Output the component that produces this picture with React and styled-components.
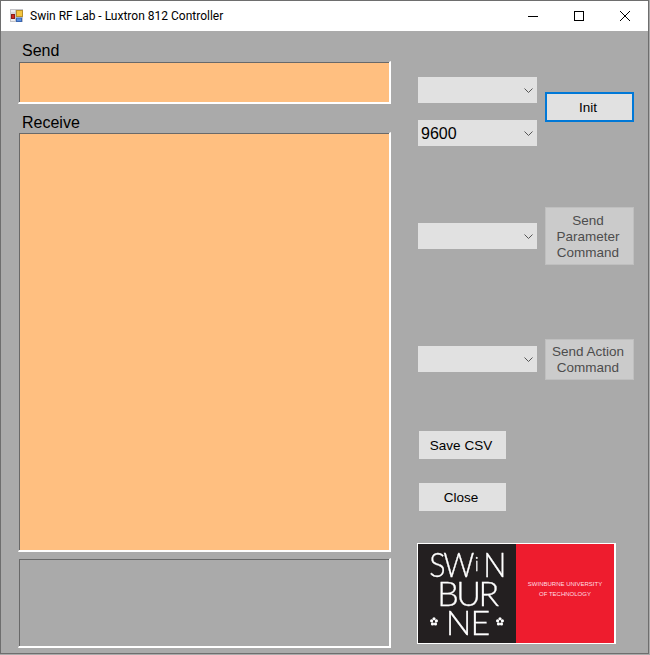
import React from 'react';
import styled, { createGlobalStyle } from 'styled-components';

const GlobalStyle = createGlobalStyle`
  html, body {
    margin: 0;
    padding: 0;
    background: #aaaaaa;
  }
  * {
    box-sizing: border-box;
  }
`;

function Chevron() {
  return (
    <ChevronIcon width="9" height="5" viewBox="0 0 9 5">
      <path d="M0.5 0.5 L4.5 4.5 L8.5 0.5" fill="none" stroke="#555" strokeWidth="1" />
    </ChevronIcon>
  );
}

function AppIcon() {
  return (
    <svg width="14" height="16" viewBox="0 0 14 16">
      <rect x="0.5" y="1.5" width="12" height="12" fill="#ececf0" stroke="#c4c4c8" />
      <path d="M0.5 5 H5.5 M5.5 1.5 V13.5" stroke="#c4c4c8" />
      <rect x="1.5" y="6.5" width="3" height="4" fill="#d0281f" stroke="#8c1c18" />
      <rect x="6.5" y="2.5" width="6" height="6" fill="#f5c63f" stroke="#b98f2a" />
      <rect x="6.5" y="10" width="5" height="3.5" fill="#5b90e0" stroke="#3a66b0" />
    </svg>
  );
}

function Flower() {
  return (
    <svg width="8" height="9" viewBox="0 0 8 9">
      <g fill="#fff">
        <circle cx="4" cy="1.8" r="1.6" />
        <circle cx="1.6" cy="3.8" r="1.6" />
        <circle cx="6.4" cy="3.8" r="1.6" />
        <circle cx="2.5" cy="6.9" r="1.6" />
        <circle cx="5.5" cy="6.9" r="1.6" />
      </g>
      <circle cx="4" cy="4.4" r="0.8" fill="#231f20" />
    </svg>
  );
}

function Combo({ value, top }) {
  return (
    <ComboBox $top={top}>
      <ComboValue>{value}</ComboValue>
      <Chevron />
    </ComboBox>
  );
}

export default function App() {
  return (
    <>
      <GlobalStyle />
      <Window>
        <TitleBar>
          <TitleLeft>
            <AppIcon />
            <TitleText>Swin RF Lab - Luxtron 812 Controller</TitleText>
          </TitleLeft>
          <Controls>
            <ControlBtn>
              <svg width="10" height="10" viewBox="0 0 10 10">
                <path d="M0 5.5 H10" stroke="#000" strokeWidth="1" />
              </svg>
            </ControlBtn>
            <ControlBtn>
              <svg width="10" height="10" viewBox="0 0 10 10">
                <rect x="0.5" y="0.5" width="9" height="9" fill="none" stroke="#000" strokeWidth="1" />
              </svg>
            </ControlBtn>
            <ControlBtn>
              <svg width="10" height="10" viewBox="0 0 10 10">
                <path d="M0 0 L10 10 M10 0 L0 10" stroke="#000" strokeWidth="1" />
              </svg>
            </ControlBtn>
          </Controls>
        </TitleBar>
        <Body>
          <LeftColumn>
            <FieldLabel>Send</FieldLabel>
            <SunkenBox $height={43} $fill="#ffbf80" />
            <FieldLabel $top={10} $height={18}>Receive</FieldLabel>
            <SunkenBox $height={420} $fill="#ffbf80" />
            <SunkenBox $height={90} $top={6} $fill="#aaaaaa" />
          </LeftColumn>
          <RightColumn>
            <TopRow>
              <ComboStack>
                <Combo />
                <Combo value="9600" />
              </ComboStack>
              <ActionButton $primary $height={30} $top={15}>Init</ActionButton>
            </TopRow>
            <CommandRow $top={61}>
              <Combo top={16} />
              <ActionButton $disabled $height={58}>
                Send<br />Parameter<br />Command
              </ActionButton>
            </CommandRow>
            <CommandRow $top={74}>
              <Combo top={7} />
              <ActionButton $disabled $height={41}>
                Send Action<br />Command
              </ActionButton>
            </CommandRow>
            <PlainButton $top={51}>Save CSV</PlainButton>
            <PlainButton $top={24}>Close</PlainButton>
            <Logo>
              <LogoDark>
                <LogoLine $squeeze={0.9}>SW<SmallI>i</SmallI>N</LogoLine>
                <LogoLine>BUR</LogoLine>
                <LogoLine>
                  <Flower />
                  <LogoNe>NE</LogoNe>
                  <Flower />
                </LogoLine>
              </LogoDark>
              <LogoRed>
                <span>SWINBURNE UNIVERSITY</span>
                <span>OF TECHNOLOGY</span>
              </LogoRed>
            </Logo>
          </RightColumn>
        </Body>
      </Window>
    </>
  );
}

const Window = styled.div`
  width: 649px;
  height: 654px;
  background: #aaaaaa;
  border: 1px solid #6e6e6e;
  overflow: hidden;
`;

const TitleBar = styled.div`
  height: 30px;
  background: #fff;
  display: flex;
  align-items: center;
  justify-content: space-between;
`;

const TitleLeft = styled.div`
  display: flex;
  align-items: center;
  gap: 6px;
  padding-left: 9px;
`;

const TitleText = styled.span`
  font: 12px Roboto, "Open Sans", sans-serif;
  color: #000;
`;

const Controls = styled.div`
  display: flex;
  height: 100%;
`;

const ControlBtn = styled.div`
  width: 46px;
  height: 100%;
  display: flex;
  align-items: center;
  justify-content: center;
`;

const Body = styled.div`
  display: flex;
  padding-left: 17px;
`;

const LeftColumn = styled.div`
  width: 373px;
  display: flex;
  flex-direction: column;
  padding-top: 11px;
`;

const FieldLabel = styled.div`
  font: 16px/18px "Liberation Sans", Arial, sans-serif;
  color: #000;
  padding-left: 4px;
  margin-top: ${(p) => p.$top || 0}px;
  height: ${(p) => p.$height || 19}px;
`;

const SunkenBox = styled.div`
  height: ${(p) => p.$height}px;
  margin-top: ${(p) => p.$top || 0}px;
  background: ${(p) => p.$fill};
  border-style: solid;
  border-width: 1px 2px 2px 1px;
  border-color: #aaaaaa #fff #fff #aaaaaa;
  box-shadow: inset 1px 1px 0 #696969;
`;

const RightColumn = styled.div`
  width: 217px;
  margin-left: 27px;
  display: flex;
  flex-direction: column;
  padding-top: 46px;
`;

const TopRow = styled.div`
  display: flex;
  align-items: flex-start;
  gap: 8px;
`;

const ComboStack = styled.div`
  display: flex;
  flex-direction: column;
  gap: 17px;
`;

const CommandRow = styled.div`
  display: flex;
  align-items: flex-start;
  gap: 8px;
  margin-top: ${(p) => p.$top}px;
`;

const ComboBox = styled.div`
  width: 119px;
  height: 26px;
  margin-top: ${(p) => p.$top || 0}px;
  background: #e1e1e1;
  display: flex;
  align-items: center;
  justify-content: space-between;
  padding: 0 4px 0 3px;
  font: 16px "Liberation Sans", Arial, sans-serif;
  color: #000;
`;

const ComboValue = styled.span`
  padding-top: 2px;
`;

const ChevronIcon = styled.svg`
  flex: none;
  margin-top: 1px;
`;

const ActionButton = styled.div`
  width: 89px;
  height: ${(p) => p.$height}px;
  margin-top: ${(p) => p.$top || 0}px;
  display: flex;
  align-items: center;
  justify-content: center;
  text-align: center;
  padding: 1px 3px 0 0;
  font: 13.5px/16px "Liberation Sans", Arial, sans-serif;
  color: ${(p) => (p.$disabled ? '#4d4d4d' : '#000')};
  background: ${(p) => (p.$disabled ? '#cbcbcb' : '#e1e1e1')};
  border: ${(p) => (p.$primary ? '2px solid #0078d7' : p.$disabled ? '1px solid #bfbfbf' : 'none')};
`;

const PlainButton = styled.div`
  width: 87px;
  height: 28px;
  margin-left: 1px;
  margin-top: ${(p) => p.$top}px;
  background: #e1e1e1;
  display: flex;
  align-items: center;
  justify-content: center;
  padding-right: 3px;
  font: 13.5px "Liberation Sans", Arial, sans-serif;
  color: #000;
`;

const Logo = styled.div`
  width: 199px;
  height: 101px;
  margin-top: 32px;
  margin-left: -1px;
  border: 1px solid #fff;
  border-width: 1px 2px 1px 1px;
  display: flex;
`;

const LogoDark = styled.div`
  width: 98px;
  background: #231f20;
  display: flex;
  flex-direction: column;
  align-items: center;
  padding-top: 5px;
  color: #fff;
  font-family: Lato, "Open Sans", sans-serif;
  font-weight: 300;
  -webkit-text-stroke: 0.3px #fff;
  filter: blur(0.3px);
`;

const LogoLine = styled.div`
  height: 29px;
  font-size: 34px;
  line-height: 29px;
  letter-spacing: -2.5px;
  display: flex;
  align-items: center;
  justify-content: center;
  gap: 4px;
  transform: scaleX(${(p) => p.$squeeze || 1});
`;

const SmallI = styled.span`
  font-size: 20px;
  letter-spacing: 0;
  margin: 0 1px 0 -1px;
  align-self: flex-end;
`;

const LogoNe = styled.span`
  padding: 0 3px 0 4px;
  letter-spacing: -1px;
`;

const LogoRed = styled.div`
  flex: 1;
  background: #ee1c2e;
  display: flex;
  flex-direction: column;
  align-items: center;
  justify-content: center;
  gap: 3px;
  color: #ffdfe2;
  font: 6px/7px "Liberation Sans", Arial, sans-serif;
  padding-bottom: 9px;
`;
